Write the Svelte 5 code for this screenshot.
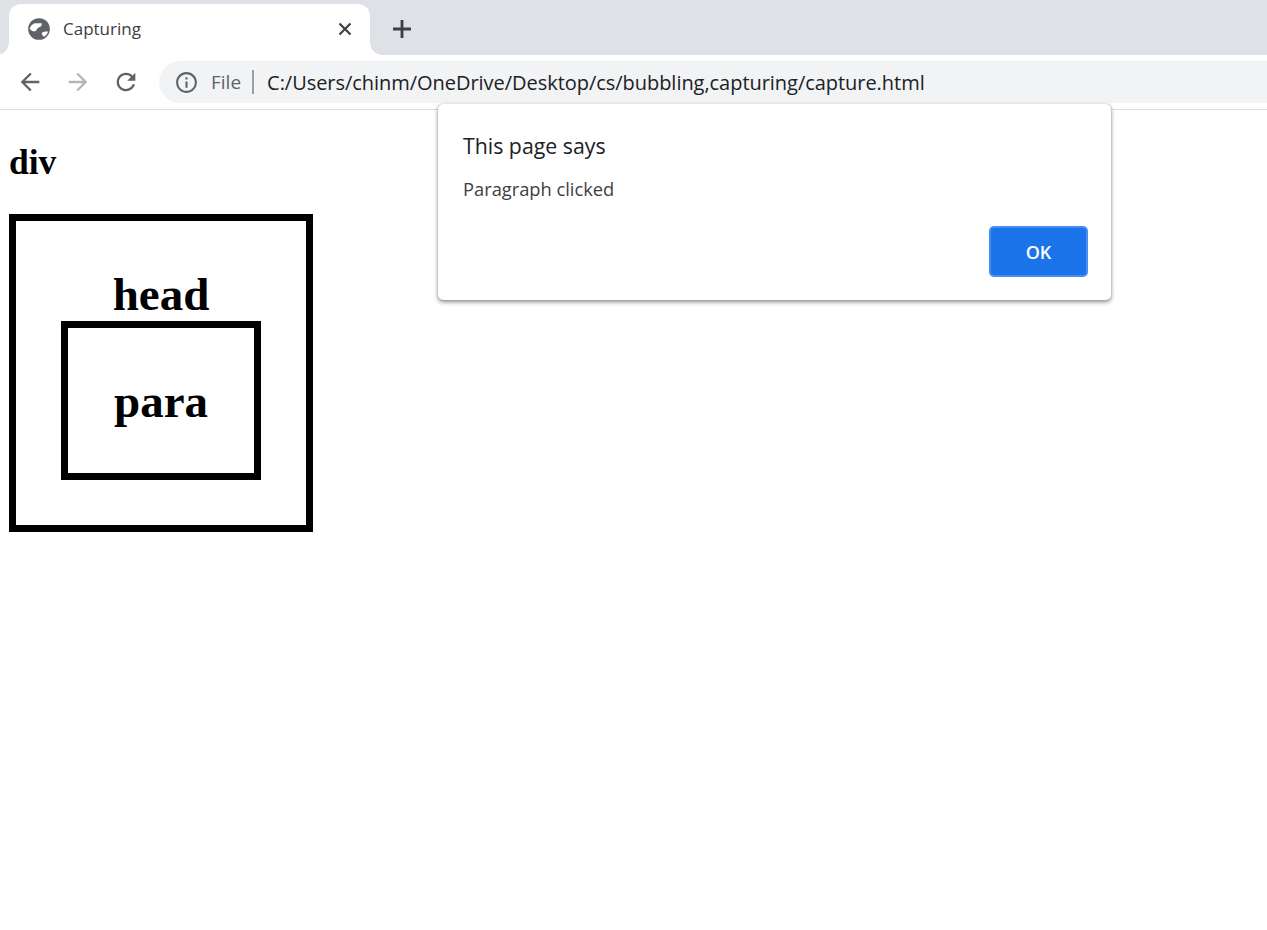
<script lang="ts">
  const url = 'C:/Users/chinm/OneDrive/Desktop/cs/bubbling,capturing/capture.html'
</script>

<div class="browser">
  <div class="tabstrip">
    <div class="tab">
      <svg class="tab__favicon" viewBox="0 0 24 24" width="26" height="26">
        <circle cx="12" cy="12" r="10" fill="#5f6368" />
        <path fill="#fff" d="M3.4 11.5C4 9.5 5.5 7.5 8 6.6L14.5 6.6C15 8.5 13.5 10.2 11.7 10.7C10.2 11.2 10.2 13 8.7 14C6.5 14.5 4.5 13.5 3.4 11.5z" />
        <path fill="#fff" d="M14.5 16C15.5 14.6 17.5 14.4 20.4 14.4C19.7 16.6 18.3 18.3 16.5 19.3C16 18 14.5 17.6 14.5 16z" />
      </svg>
      <span class="tab__title">Capturing</span>
      <svg class="tab__close" viewBox="0 0 14 14" width="14" height="14">
        <path d="M1.5 1.5l11 11M12.5 1.5l-11 11" stroke="#3c4043" stroke-width="2.2" fill="none" />
      </svg>
    </div>
    <svg class="tabstrip__new" viewBox="0 0 20 20" width="20" height="20">
      <path d="M10 1v18M1 10h18" stroke="#3c4043" stroke-width="2.8" fill="none" />
    </svg>
  </div>

  <div class="toolbar">
    <svg class="toolbar__btn" viewBox="0 0 24 24" width="28" height="28">
      <path fill="#5f6368" d="M20 11H7.83l5.59-5.59L12 4l-8 8 8 8 1.41-1.41L7.83 13H20v-2z" />
    </svg>
    <svg class="toolbar__btn" viewBox="0 0 24 24" width="28" height="28">
      <path fill="#b4b6b9" d="M12 4l-1.41 1.41L16.17 11H4v2h12.17l-5.58 5.59L12 20l8-8z" />
    </svg>
    <svg class="toolbar__btn" viewBox="0 0 24 24" width="28" height="28">
      <path fill="#5f6368" d="M17.65 6.35C16.2 4.9 14.21 4 12 4c-4.42 0-7.99 3.58-7.99 8s3.57 8 7.99 8c3.73 0 6.84-2.55 7.73-6h-2.08c-.82 2.33-3.04 4-5.65 4-3.31 0-6-2.69-6-6s2.69-6 6-6c1.66 0 3.14.69 4.22 1.78L13 11h7V4l-2.35 2.35z" />
    </svg>
    <div class="omnibox">
      <svg class="omnibox__info" viewBox="0 0 24 24" width="25" height="25">
        <path fill="#5f6368" d="M11 7h2v2h-2zm0 4h2v6h-2zm1-9C6.48 2 2 6.48 2 12s4.48 10 10 10 10-4.48 10-10S17.52 2 12 2zm0 18c-4.41 0-8-3.59-8-8s3.59-8 8-8 8 3.59 8 8-3.59 8-8 8z" />
      </svg>
      <span class="omnibox__scheme">File</span>
      <span class="omnibox__divider"></span>
      <span class="omnibox__url">{url}</span>
    </div>
  </div>

  <main class="page">
    <h2 class="page__log">div</h2>
    <div class="outer">
      <h1 class="outer__title">head</h1>
      <div class="inner">
        <p class="inner__text">para</p>
      </div>
    </div>
  </main>

  <div class="dialog" role="alertdialog">
    <div class="dialog__title">This page says</div>
    <div class="dialog__message">Paragraph clicked</div>
    <div class="dialog__actions">
      <button class="dialog__ok">OK</button>
    </div>
  </div>
</div>

<style>
  :global(body) {
    margin: 0;
    background: #fff;
  }

  .browser {
    position: relative;
    height: 930px;
    overflow: hidden;
    font-family: "Open Sans", "Noto Sans", sans-serif;
  }

  .tabstrip {
    height: 55px;
    box-sizing: border-box;
    padding: 4px 0 0 9px;
    background: #dee1e6;
    display: flex;
    align-items: stretch;
  }

  .tab {
    position: relative;
    width: 361px;
    box-sizing: border-box;
    padding: 0 18px 2px 17px;
    background: #fff;
    border-radius: 12px 12px 0 0;
    display: flex;
    align-items: center;
  }

  .tab::before,
  .tab::after {
    content: '';
    position: absolute;
    bottom: 0;
    width: 12px;
    height: 12px;
  }

  .tab::before {
    left: -12px;
    background: radial-gradient(circle at 0 0, #dee1e6 11.5px, #fff 12px);
  }

  .tab::after {
    right: -12px;
    background: radial-gradient(circle at 100% 0, #dee1e6 11.5px, #fff 12px);
  }

  .tab__favicon {
    flex-shrink: 0;
  }

  .tab__title {
    margin-left: 11px;
    flex: 1;
    font-size: 17px;
    color: #3c4043;
  }

  .tab__close {
    flex-shrink: 0;
  }

  .tabstrip__new {
    align-self: center;
    margin: -2px 0 0 22px;
  }

  .toolbar {
    height: 55px;
    box-sizing: border-box;
    padding: 6px 0 6px 16px;
    border-bottom: 1px solid #dadce0;
    background: #fff;
    display: flex;
    align-items: center;
    gap: 20px;
  }

  .toolbar__btn {
    flex-shrink: 0;
  }

  .omnibox {
    flex: 1;
    height: 42px;
    margin-left: -1px;
    margin-right: -40px;
    padding-left: 15px;
    border-radius: 21px;
    background: #f1f3f4;
    display: flex;
    align-items: center;
    font-size: 20px;
  }

  .omnibox__scheme {
    margin-left: 12px;
    font-size: 19px;
    color: #5f6368;
  }

  .omnibox__divider {
    width: 2px;
    height: 24px;
    margin: 0 13px 0 11px;
    background: #9aa0a6;
  }

  .omnibox__url {
    color: #202124;
    white-space: nowrap;
    letter-spacing: -0.04px;
  }

  .page {
    padding: 0 9px;
    font-family: "Liberation Serif", "Times New Roman", serif;
    color: #000;
  }

  .page__log {
    margin: 0;
    padding-top: 30px;
    font-size: 35.5px;
    line-height: 44px;
    font-weight: 700;
  }

  .outer {
    width: 304px;
    height: 318px;
    margin-top: 30px;
    box-sizing: border-box;
    padding-top: 48px;
    border: 7px solid #000;
  }

  .outer__title {
    margin: 0 0 2px;
    font-size: 47px;
    line-height: 50px;
    text-align: center;
  }

  .inner {
    width: 200px;
    height: 159px;
    margin: 0 auto;
    box-sizing: border-box;
    border: 7px solid #000;
    display: flex;
    align-items: center;
    justify-content: center;
  }

  .inner__text {
    margin: 0;
    font-size: 47px;
    font-weight: 700;
    line-height: 50px;
  }

  .dialog {
    position: absolute;
    top: 104px;
    left: 438px;
    width: 673px;
    height: 196px;
    box-sizing: border-box;
    padding: 26px 23px 23px 25px;
    background: #fff;
    border-radius: 5px;
    box-shadow: 0 0 1px rgb(60 64 67 / 0.5), 0 2px 4px rgb(60 64 67 / 0.6);
    display: flex;
    flex-direction: column;
  }

  .dialog__title {
    font-size: 21.3px;
    line-height: 32px;
    color: #202124;
  }

  .dialog__message {
    margin-top: 15px;
    font-size: 18.3px;
    line-height: 24px;
    color: #3c4043;
  }

  .dialog__actions {
    margin-top: auto;
    display: flex;
    justify-content: flex-end;
  }

  .dialog__ok {
    width: 99px;
    height: 51px;
    box-sizing: border-box;
    border: 2px solid #4b8bf4;
    border-radius: 5px;
    background: #1a73e8;
    color: #fff;
    font: 600 18px "Open Sans", "Noto Sans", sans-serif;
  }
</style>
